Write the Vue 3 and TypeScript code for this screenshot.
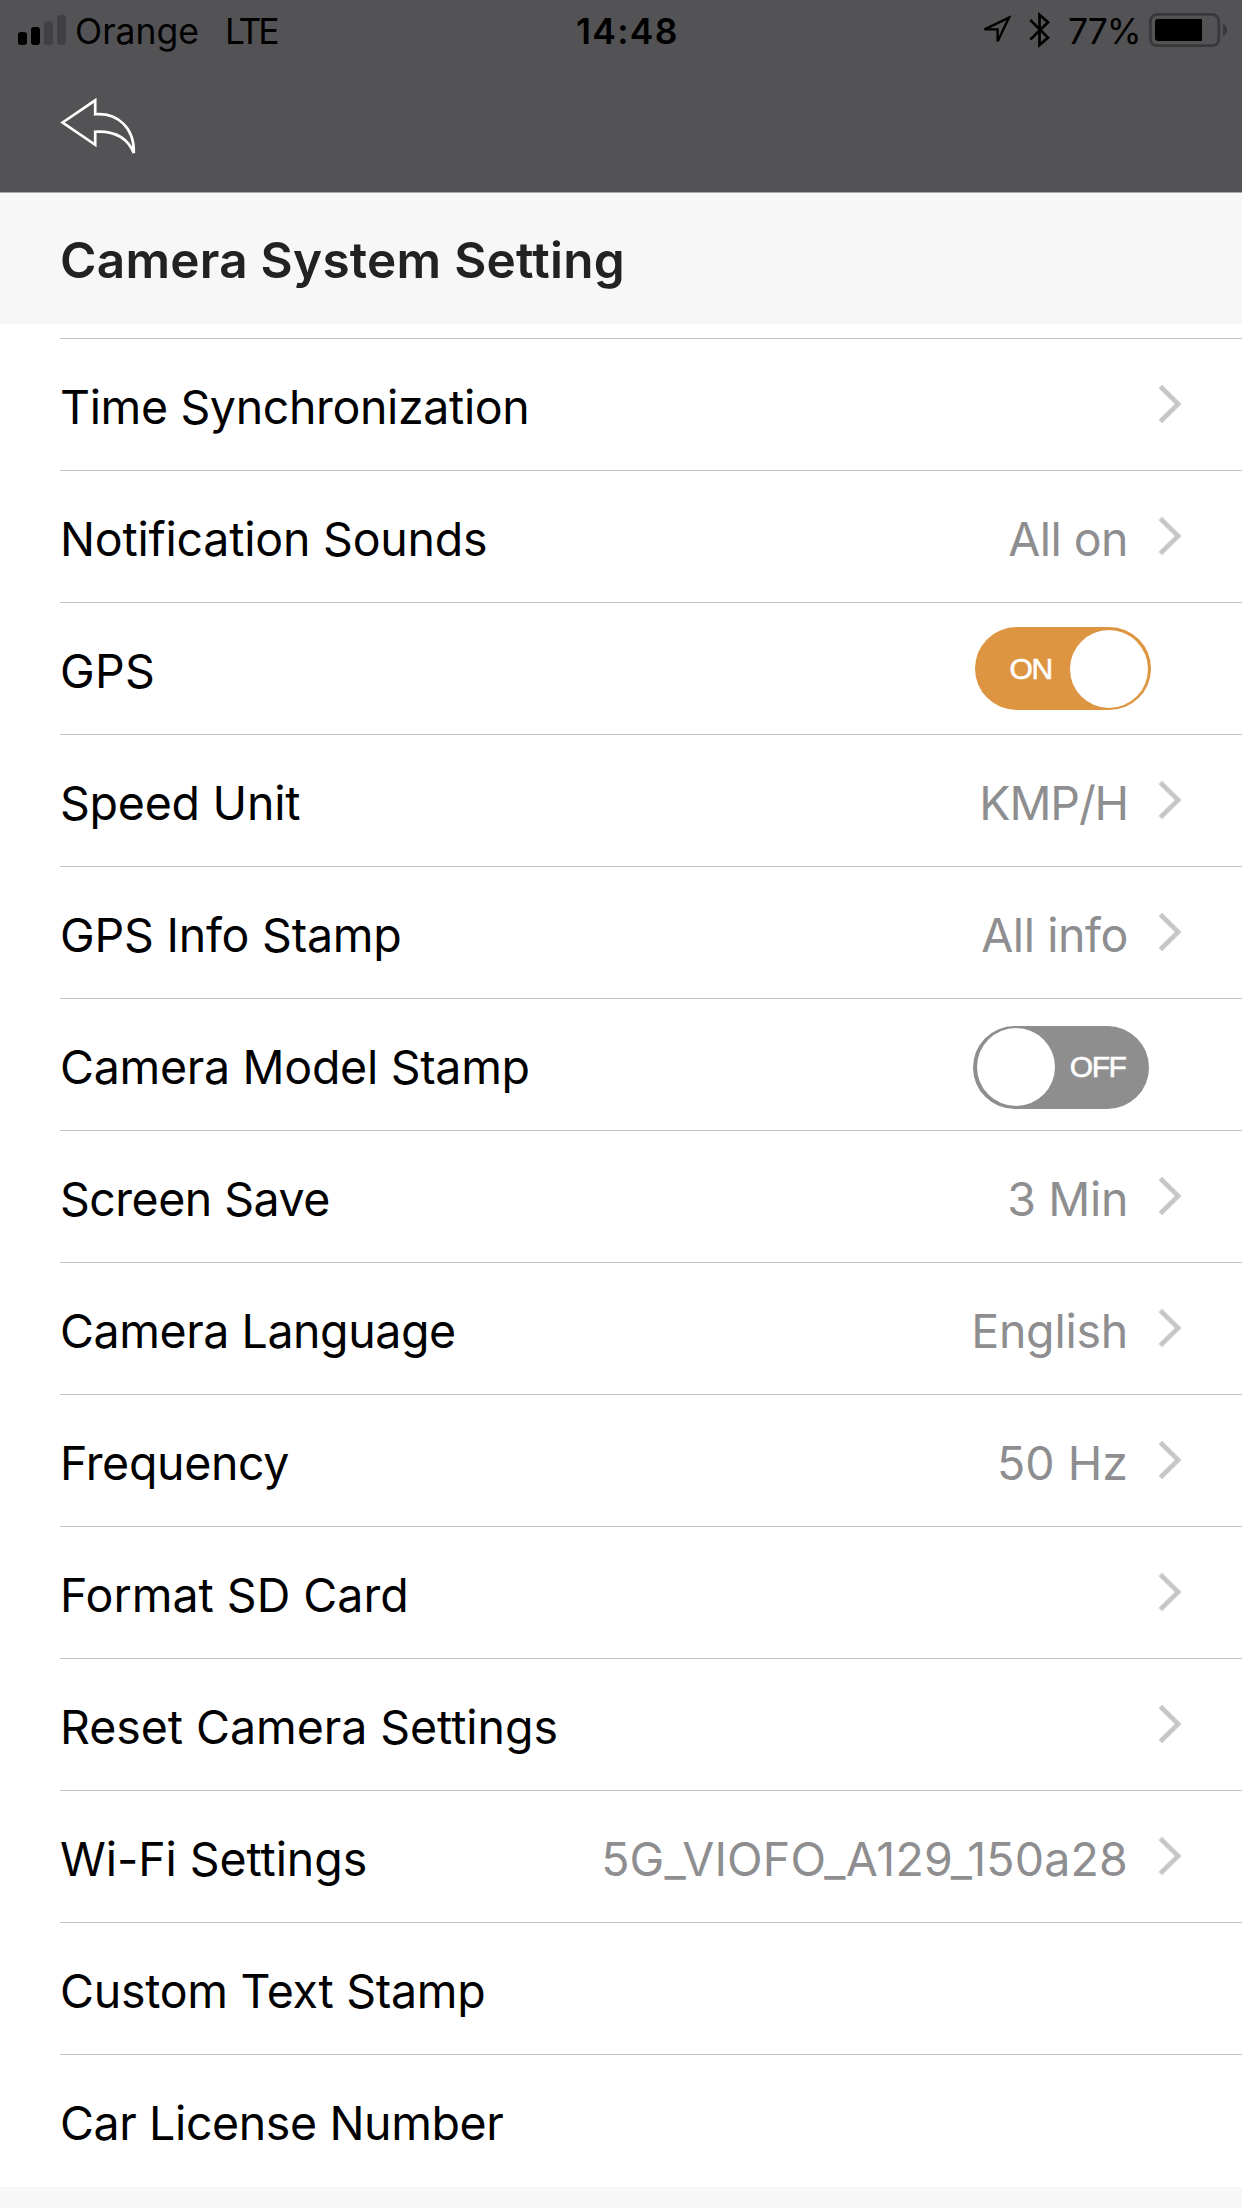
<script setup lang="ts">
interface Text {
  text: string
  tracking: number
}

interface Setting {
  label: Text
  value?: Text
  toggle?: 'on' | 'off'
  chevron?: boolean
}

const t = (text: string, tracking: number): Text => ({ text, tracking })

const settings: Setting[] = [
  { label: t('Time Synchronization', -0.36), chevron: true },
  { label: t('Notification Sounds', -0.22), value: t('All on', -0.56), chevron: true },
  { label: t('GPS', 0.3), toggle: 'on' },
  { label: t('Speed Unit', -0.25), value: t('KMP/H', -1.1), chevron: true },
  { label: t('GPS Info Stamp', -0.22), value: t('All info', -0.41), chevron: true },
  { label: t('Camera Model Stamp', -0.29), toggle: 'off' },
  { label: t('Screen Save', -0.52), value: t('3 Min', -0.36), chevron: true },
  { label: t('Camera Language', -0.44), value: t('English', -0.24), chevron: true },
  { label: t('Frequency', -0.35), value: t('50 Hz', 0), chevron: true },
  { label: t('Format SD Card', 0), chevron: true },
  { label: t('Reset Camera Settings', -0.05), chevron: true },
  { label: t('Wi-Fi Settings', -0.08), value: t('5G_VIOFO_A129_150a28', 0.17), chevron: true },
  { label: t('Custom Text Stamp', -0.27) },
  { label: t('Car License Number', -0.39) },
]
</script>

<template>
  <div class="screen">
    <header class="top">
      <div class="status">
        <div class="status-left">
          <svg class="signal" width="48" height="30" viewBox="0 0 48 30">
            <rect x="0" y="17" width="9" height="13" rx="3" fill="#000" />
            <rect x="13" y="12" width="9" height="18" rx="3" fill="#000" />
            <rect x="26" y="6" width="9" height="24" rx="3" fill="#404142" />
            <rect x="39" y="0" width="9" height="30" rx="3" fill="#404142" />
          </svg>
          <span class="carrier">Orange</span>
          <span class="network">LTE</span>
        </div>
        <div class="clock">14:48</div>
        <div class="status-right">
          <svg class="location" width="32" height="32" viewBox="0 0 32 32">
            <path d="M29 3.6 4.5 15.4H17.6V27.6Z" fill="none" stroke="#000" stroke-width="2.3" />
          </svg>
          <svg class="bluetooth" width="22" height="36" viewBox="0 0 22 36">
            <path d="M1.3 8 19 25.6 10.5 33V2.8L19 10.2 1.3 27.6" fill="none" stroke="#000" stroke-width="2.7" />
          </svg>
          <span class="percent">77%</span>
          <svg class="battery" width="80" height="34" viewBox="0 0 80 34">
            <rect x="1.4" y="1.4" width="68.4" height="31.2" rx="6.5" fill="none" stroke="#39393b" stroke-width="2.7" />
            <rect x="6" y="6" width="47" height="22" rx="3" fill="#000" />
            <rect x="48" y="6" width="5" height="22" fill="#000" />
            <path d="M74 11Q78 13 78 17T74 23Z" fill="#39393b" />
          </svg>
        </div>
      </div>
      <svg class="back" width="80" height="64" viewBox="0 0 80 64">
        <path
          d="M2.6 28.5 35.2 6.4V20.2C58 18.5 74.5 34 73.8 59C68 45 57 36.6 35.2 37.8V50.8Z"
          fill="none"
          stroke="#fff"
          stroke-width="2.7"
        />
      </svg>
    </header>

    <h1 class="section">Camera System Setting</h1>

    <main class="list">
      <div v-for="s in settings" :key="s.label.text" class="row">
        <span class="label" :style="{ letterSpacing: s.label.tracking + 'px' }">{{ s.label.text }}</span>
        <span v-if="s.value" class="value" :style="{ letterSpacing: s.value.tracking + 'px' }">{{ s.value.text }}</span>
        <div v-if="s.toggle === 'on'" class="toggle on">
          <span class="state">ON</span>
          <span class="knob"></span>
        </div>
        <div v-if="s.toggle === 'off'" class="toggle off">
          <span class="knob"></span>
          <span class="state">OFF</span>
        </div>
        <svg v-if="s.chevron" class="chevron" width="24" height="40" viewBox="0 0 24 40">
          <path d="M2.3 2.5 20.2 20 2.3 37.5" fill="none" stroke="#c7c7ca" stroke-width="4.6" />
        </svg>
      </div>
    </main>
  </div>
</template>

<style>
body {
  background: #f7f7f8;
}
</style>

<style scoped>
.screen {
  width: 1242px;
  height: 2208px;
  overflow: hidden;
  background: #f7f7f8;
  font-family: Inter, "Liberation Sans", sans-serif;
  color: #000;
}

.top {
  box-sizing: border-box;
  height: 193px;
  background: #535355;
  border-bottom: 1px solid #a9a9aa;
}

.status {
  display: grid;
  grid-template-columns: 576px 404px 262px;
  height: 62px;
  font-size: 35.5px;
  line-height: 64px;
  white-space: nowrap;
}

.status-left,
.status-right {
  display: flex;
  align-items: flex-start;
}

.signal {
  margin: 15px 9px 0 18px;
}

.carrier {
  width: 150px;
}

.network {
  letter-spacing: -3.2px;
}

.clock {
  font-weight: 600;
  letter-spacing: 1.3px;
}

.location {
  margin-top: 14px;
}

.bluetooth {
  margin: 12px 0 0 17px;
}

.percent {
  width: 80px;
  margin-left: 17px;
  letter-spacing: -1px;
}

.battery {
  flex: none;
  margin: 13px 0 0 1px;
}

.back {
  display: block;
  margin: 32px 0 0 60px;
}

.section {
  box-sizing: border-box;
  height: 131px;
  margin: 0;
  padding: 3px 0 0 60px;
  color: #222;
  font-size: 49.5px;
  font-weight: 600;
  line-height: 128px;
  letter-spacing: 0.25px;
}

.list {
  box-sizing: border-box;
  height: 1863px;
  padding: 14px 0 0 60px;
  background: #fff;
}

.row {
  box-sizing: border-box;
  display: flex;
  align-items: center;
  height: 132px;
  padding-right: 60px;
  border-top: 1px solid #c3c3c5;
  font-size: 46.5px;
  white-space: nowrap;
}

.label {
  flex: 1;
  padding-top: 5px;
}

.value {
  margin-right: 30px;
  padding-top: 5px;
  color: #8e8e90;
}

.chevron {
  flex: none;
  margin-bottom: 2px;
}

.toggle {
  box-sizing: border-box;
  display: flex;
  align-items: center;
  justify-content: space-between;
  width: 176px;
  height: 83px;
  border-radius: 42px;
  color: #fff;
  font-family: "Liberation Sans", Arial, sans-serif;
  font-size: 30px;
  letter-spacing: -1.4px;
  -webkit-text-stroke: 0.6px #fff;
}

.on {
  margin-right: 31px;
  padding: 0 3.5px 0 34.5px;
  background: #de9541;
}

.off {
  margin: 5px 33px 0 0;
  padding: 0 23.5px 0 3.5px;
  background: #8e8e8e;
}

.knob {
  width: 78px;
  height: 78px;
  border-radius: 50%;
  background: #fff;
}
</style>
